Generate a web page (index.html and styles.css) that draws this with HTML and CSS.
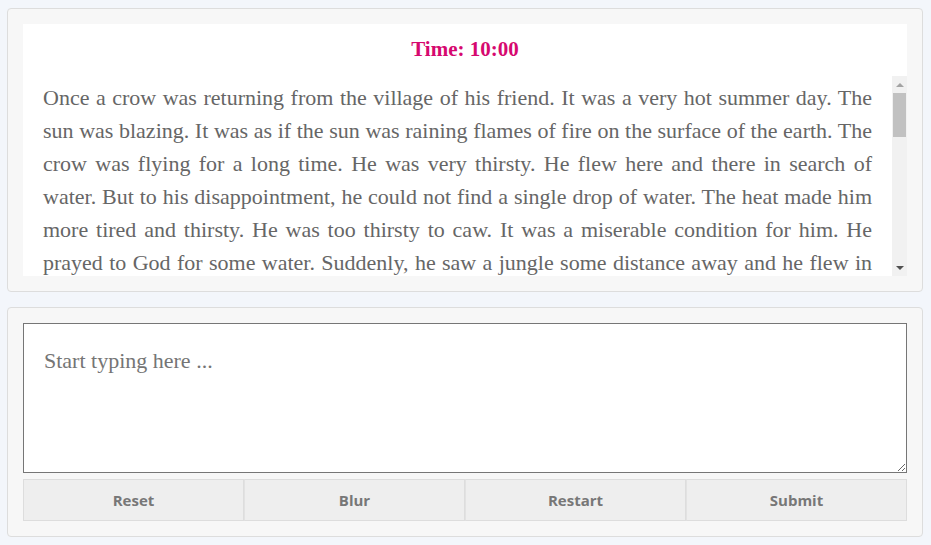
FILE: index.html
```html
<!DOCTYPE html>
<html>
<head>
<meta charset="utf-8">
<link rel="stylesheet" href="styles.css">
</head>
<body>
<section class="card">
  <div class="reader">
    <h3 class="timer">Time: 10:00</h3>
    <div class="viewport">
      <div class="passage">
        <p>Once a crow was returning from the village of his friend. It was a very hot summer day. The sun was blazing. It was as if the sun was raining flames of fire on the surface of the earth. The crow was flying for a long time. He was very thirsty. He flew here and there in search of water. But to his disappointment, he could not find a single drop of water. The heat made him more tired and thirsty. He was too thirsty to caw. It was a miserable condition for him. He prayed to God for some water. Suddenly, he saw a jungle some distance away and he flew in that direction. He sat on the branch of a big tree and looked around for water. At last he saw a pitcher under the tree. He flew down to it and peeped in. There was some water at the bottom of the pitcher, but his beak could not reach it. He tried his best to push the pitcher over, but it was too heavy for him. He did not lose heart. He thought and thought and at last he hit upon a plan. He saw some pebbles lying near the pitcher. He picked them up one by one and dropped them into the pitcher. Slowly the water rose up to the brim of the pitcher. The crow was very happy. He drank the cool water to his heart's content and quenched his thirst. Then he thanked God and flew away happily towards his home.</p>
      </div>
      <div class="scrollbar" aria-hidden="true">
        <div class="sb-btn"><span class="arrow-up"></span></div>
        <div class="sb-track"><div class="sb-thumb"></div></div>
        <div class="sb-btn"><span class="arrow-down"></span></div>
      </div>
    </div>
  </div>
</section>
<section class="card">
  <textarea class="entry" placeholder="Start typing here ..."></textarea>
  <div class="actions">
    <button class="btn">Reset</button>
    <button class="btn">Blur</button>
    <button class="btn">Restart</button>
    <button class="btn">Submit</button>
  </div>
</section>
</body>
</html>
```
FILE: styles.css
```css
html, body {
  margin: 0;
  padding: 0;
}
body {
  background: #f3f6fb;
  padding: 8px 8px 9px 7px;
  display: flex;
  flex-direction: column;
  gap: 15px;
  font-family: "Liberation Serif", "Times New Roman", serif;
}
.card {
  background: #f7f7f7;
  border: 1px solid #dddddd;
  border-radius: 4px;
  padding: 15px;
}
.reader {
  background: #ffffff;
  padding-top: 14px;
}
.timer {
  margin: 0 0 15px;
  text-align: center;
  font-size: 21px;
  font-weight: bold;
  line-height: 23px;
  color: #d6086f;
}
.viewport {
  display: flex;
  height: 200px;
}
.passage {
  flex: 1;
  min-width: 0;
  overflow: hidden;
  padding: 5px 20px 0;
}
.passage p {
  margin: 0;
  font-size: 22px;
  line-height: 33px;
  color: #666666;
  text-align: justify;
}
.scrollbar {
  width: 15px;
  flex: none;
  background: #f1f1f1;
  display: flex;
  flex-direction: column;
}
.sb-btn {
  height: 17px;
  flex: none;
  display: flex;
  justify-content: center;
  align-items: center;
}
.arrow-up {
  width: 0;
  height: 0;
  border-left: 4px solid transparent;
  border-right: 4px solid transparent;
  border-bottom: 4px solid #a3a3a3;
}
.arrow-down {
  width: 0;
  height: 0;
  border-left: 4px solid transparent;
  border-right: 4px solid transparent;
  border-top: 4px solid #505050;
}
.sb-track {
  flex: 1;
  padding: 0 1px 0 1px;
}
.sb-thumb {
  height: 44px;
  background: #c1c1c1;
}
.entry {
  display: block;
  width: 100%;
  height: 150px;
  box-sizing: border-box;
  border: 1px solid #767676;
  padding: 20px 20px;
  font-family: "Liberation Serif", "Times New Roman", serif;
  font-size: 22px;
  line-height: 33px;
  color: #444;
  background: #fff;
  margin: 0;
  resize: vertical;
}
.entry::placeholder {
  color: #757575;
}
.actions {
  display: grid;
  grid-template-columns: repeat(4, 1fr);
  margin-top: 6px;
}
.btn {
  height: 42px;
  background: #eeeeee;
  border: 1px solid #dddddd;
  font-family: "Open Sans", "Noto Sans", sans-serif;
  font-weight: bold;
  font-size: 15px;
  color: #777777;
  margin: 0;
}
.btn + .btn {
  border-left: 1px solid #e2e2e2;
}
```
